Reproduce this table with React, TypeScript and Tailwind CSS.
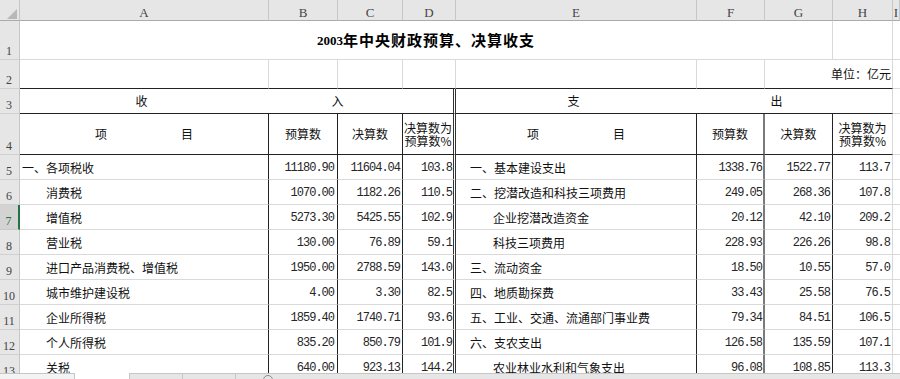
import React from 'react';

type Row = {
  n: number;
  a: string;
  ai: boolean;
  b: string;
  c: string;
  d: string;
  e: string;
  ei: boolean;
  f: string;
  g: string;
  h: string;
};

const rows: Row[] = [
  { n: 5, a: '一、各项税收', ai: false, b: '11180.90', c: '11604.04', d: '103.8', e: '一、基本建设支出', ei: false, f: '1338.76', g: '1522.77', h: '113.7' },
  { n: 6, a: '消费税', ai: true, b: '1070.00', c: '1182.26', d: '110.5', e: '二、挖潜改造和科技三项费用', ei: false, f: '249.05', g: '268.36', h: '107.8' },
  { n: 7, a: '增值税', ai: true, b: '5273.30', c: '5425.55', d: '102.9', e: '企业挖潜改造资金', ei: true, f: '20.12', g: '42.10', h: '209.2' },
  { n: 8, a: '营业税', ai: true, b: '130.00', c: '76.89', d: '59.1', e: '科技三项费用', ei: true, f: '228.93', g: '226.26', h: '98.8' },
  { n: 9, a: '进口产品消费税、增值税', ai: true, b: '1950.00', c: '2788.59', d: '143.0', e: '三、流动资金', ei: false, f: '18.50', g: '10.55', h: '57.0' },
  { n: 10, a: '城市维护建设税', ai: true, b: '4.00', c: '3.30', d: '82.5', e: '四、地质勘探费', ei: false, f: '33.43', g: '25.58', h: '76.5' },
  { n: 11, a: '企业所得税', ai: true, b: '1859.40', c: '1740.71', d: '93.6', e: '五、工业、交通、流通部门事业费', ei: false, f: '79.34', g: '84.51', h: '106.5' },
  { n: 12, a: '个人所得税', ai: true, b: '835.20', c: '850.79', d: '101.9', e: '六、支农支出', ei: false, f: '126.58', g: '135.59', h: '107.1' },
  { n: 13, a: '关税', ai: true, b: '640.00', c: '923.13', d: '144.2', e: '农业林业水利和气象支出', ei: true, f: '96.08', g: '108.85', h: '113.3' },
];

const colLetters = ['A', 'B', 'C', 'D', 'E', 'F', 'G', 'H', 'I'];

const num =
  "flex items-center justify-end pt-[1px] font-['Liberation_Mono',monospace] text-[12px] tracking-[-1px] text-[#262626] whitespace-nowrap";
const txt = 'flex items-center pt-[1px] text-[12px] text-[#111] whitespace-nowrap overflow-hidden';

function RowHead({ n, sel = false }: { n: number; sel?: boolean }) {
  return sel ? (
    <div className="flex items-end justify-center pb-[2px] pr-[1px] bg-[#d3d3d3] border-r-2 border-r-[#217346] border-b border-b-[#c8c8c8] font-['Liberation_Serif',serif] text-[12px] leading-none text-[#217346]">
      {n}
    </div>
  ) : (
    <div className="flex items-end justify-center pb-[2px] pr-[1px] bg-[#e6e6e6] border-r border-r-[#c6c6c6] border-b border-b-[#d0d0d0] font-['Liberation_Serif',serif] text-[12px] leading-none text-[#444]">
      {n}
    </div>
  );
}

export default function App() {
  return (
    <div className="w-[900px] h-[379px] overflow-hidden bg-white flex flex-col font-['Noto_Sans_CJK_SC',sans-serif]">
      <div className="h-[373px] overflow-hidden">
        <div className="grid w-[900px] grid-cols-[20px_249px_69px_65px_53px_241px_68px_68px_60px_1fr] grid-rows-[21px_39px_29px_25px_41px_repeat(9,25px)]">
          {/* column header row */}
          <div className="relative bg-[#e6e6e6] border-r border-r-[#c6c6c6] border-b border-b-[#ababab]">
            <svg className="absolute left-[7px] top-[9px]" width="10" height="10" viewBox="0 0 10 10">
              <polygon points="10,0 10,10 0,10" fill="#b8b8b8" />
            </svg>
          </div>
          {colLetters.map((l) => (
            <div
              key={l}
              className="flex items-end justify-center pb-[1px] bg-[#e6e6e6] border-r border-r-[#c6c6c6] border-b border-b-[#ababab] font-['Liberation_Serif',serif] text-[13px] leading-none text-[#444]"
            >
              {l}
            </div>
          ))}

          {/* row 1 */}
          <RowHead n={1} />
          <div className="col-span-7 flex items-center justify-center pt-[1px] border-r border-b border-[#d9d9d9] text-[15px] font-bold tracking-[1px] text-black">
            <span className="font-['Liberation_Serif',serif] text-[13px] tracking-[0px]">2003</span>
            <span>年中央财政预算、决算收支</span>
          </div>
          <div className="border-r border-b border-[#d9d9d9]" />
          <div className="border-b border-[#d9d9d9]" />

          {/* row 2 */}
          <RowHead n={2} />
          <div className="border-r border-r-[#d9d9d9] border-b border-b-[#222]" />
          <div className="border-r border-r-[#d9d9d9] border-b border-b-[#222]" />
          <div className="border-r border-r-[#d9d9d9] border-b border-b-[#222]" />
          <div className="border-r border-r-[#d9d9d9] border-b border-b-[#222]" />
          <div className="border-r border-r-[#d9d9d9] border-b border-b-[#222]" />
          <div className="border-r border-r-[#d9d9d9] border-b border-b-[#222]" />
          <div className="col-span-2 flex items-center justify-end pr-[1px] border-r border-r-[#d9d9d9] border-b border-b-[#222] text-[12px] text-[#111]">
            单位：亿元
          </div>
          <div className="border-b border-[#d9d9d9]" />

          {/* row 3 */}
          <RowHead n={3} />
          <div className="col-span-4 flex items-center justify-center gap-[184px] pl-[6px] border-r-[3px] border-double border-r-[#333] border-b border-b-[#222] text-[12px] text-[#111]">
            <span>收</span>
            <span>入</span>
          </div>
          <div className="col-span-4 flex items-center justify-center gap-[191px] pl-[2px] border-r border-r-[#d9d9d9] border-b border-b-[#222] text-[12px] text-[#111]">
            <span>支</span>
            <span>出</span>
          </div>
          <div className="border-b border-[#d9d9d9]" />

          {/* row 4 */}
          <RowHead n={4} />
          <div className="flex items-center justify-center gap-[74px] border-r border-b border-[#222] text-[12px] text-[#111]">
            <span>项</span>
            <span>目</span>
          </div>
          <div className="flex items-center justify-center border-r border-b border-[#222] text-[12px] text-[#111]">预算数</div>
          <div className="flex items-center justify-center border-r border-b border-[#222] text-[12px] text-[#111]">决算数</div>
          <div className="flex flex-col items-center justify-center border-r-[3px] border-double border-r-[#333] border-b border-b-[#222] text-[12px] leading-[13px] text-[#111] whitespace-nowrap">
            <span>决算数为</span>
            <span>预算数%</span>
          </div>
          <div className="flex items-center justify-center gap-[74px] border-r border-b border-[#222] text-[12px] text-[#111]">
            <span>项</span>
            <span>目</span>
          </div>
          <div className="flex items-center justify-center border-r-2 border-r-[#7a7a7a] border-b border-b-[#222] text-[12px] text-[#111]">预算数</div>
          <div className="flex items-center justify-center border-r border-b border-[#222] text-[12px] text-[#111]">决算数</div>
          <div className="flex flex-col items-center justify-center border-r border-r-[#d9d9d9] border-b border-b-[#222] text-[12px] leading-[13px] text-[#111] whitespace-nowrap">
            <span>决算数为</span>
            <span>预算数%</span>
          </div>
          <div className="border-b border-[#d9d9d9]" />

          {/* body rows */}
          {rows.map((r) => (
            <React.Fragment key={r.n}>
              <RowHead n={r.n} sel={r.n === 7} />
              <div className={`${txt} border-r border-r-[#222] border-b border-b-[#d9d9d9] ${r.ai ? 'pl-[26px]' : 'pl-[2px]'}`}>{r.a}</div>
              <div className={`${num} pr-[3px] border-r border-r-[#222] border-b border-b-[#d9d9d9]`}>{r.b}</div>
              <div className={`${num} pr-[2px] border-r border-r-[#222] border-b border-b-[#d9d9d9]`}>{r.c}</div>
              <div className={`${num} pr-[1px] border-r-[3px] border-double border-r-[#333] border-b border-b-[#d9d9d9]`}>{r.d}</div>
              <div className={`${txt} border-r border-r-[#222] border-b border-b-[#d9d9d9] ${r.ei ? 'pl-[37px]' : 'pl-[14px]'}`}>{r.e}</div>
              <div className={`${num} pr-[1px] border-r-2 border-r-[#7a7a7a] border-b border-b-[#d9d9d9]`}>{r.f}</div>
              <div className={`${num} pr-[2px] border-r border-r-[#222] border-b border-b-[#d9d9d9]`}>{r.g}</div>
              <div className={`${num} pr-[2px] border-r border-r-[#d9d9d9] border-b border-b-[#d9d9d9]`}>{r.h}</div>
              <div className="border-b border-[#d9d9d9]" />
            </React.Fragment>
          ))}
        </div>
      </div>

      {/* bottom bar */}
      <div className="h-[6px] flex">
        <div className="w-[75px] bg-[#f3f3f3] border-t border-r border-[#c6c6c6]" />
        <div className="w-[54px] bg-white" />
        <div className="flex-1 flex bg-[#e6e6e6] border-t border-l border-[#c6c6c6]">
          <div className="w-[53px] border-r border-[#c6c6c6]" />
          <div className="w-[53px] border-r border-[#c6c6c6]" />
          <div className="ml-[27px] mt-[1px] w-[10px] h-[10px] rounded-full border border-[#8a8a8a]" />
        </div>
      </div>
    </div>
  );
}
